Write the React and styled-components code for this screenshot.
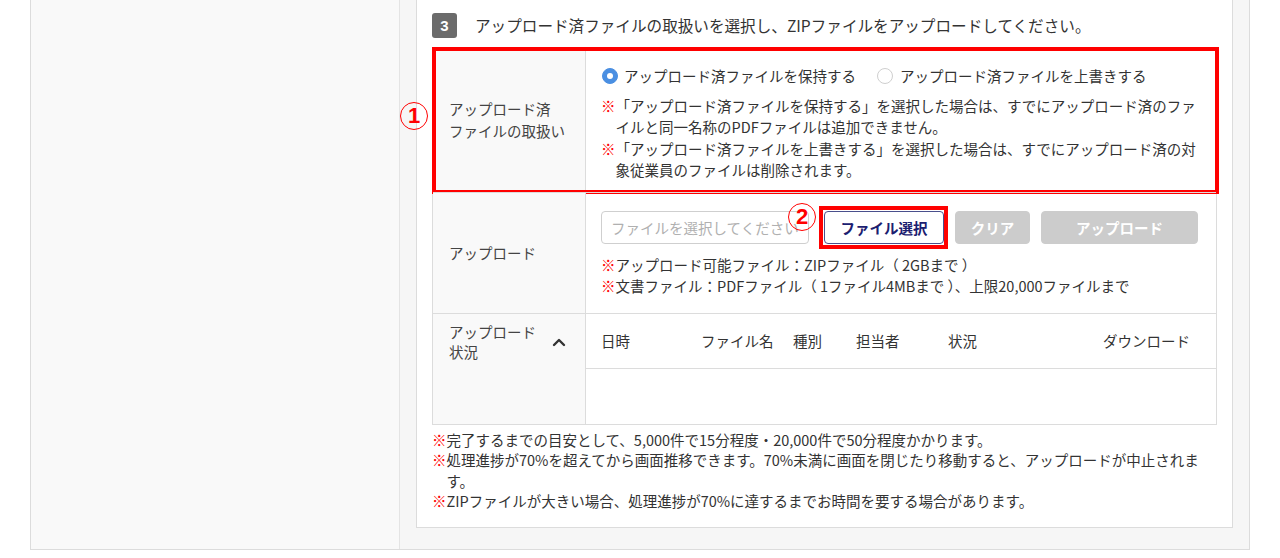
import React from "react";
import styled, { createGlobalStyle } from "styled-components";

const GlobalStyle = createGlobalStyle`
  html, body { margin: 0; padding: 0; background: #fff; }
  body {
    font-family: "Noto Sans CJK JP", "Noto Sans", sans-serif;
    color: #333;
    font-size: 14.5px;
  }
  * { box-sizing: border-box; }
`;

const Page = styled.div`
  padding-left: 30px;
`;

const Frame = styled.div`
  width: 1220px;
  display: grid;
  grid-template-columns: 369px 849px;
  border: 1px solid #dcdcdc;
  border-top: none;
`;

const SideColumn = styled.aside`
  background: #f9f9f9;
  border-right: 1px solid #e4e4e4;
`;

const MainArea = styled.main`
  background: #f6f6f6;
  padding: 0 16px 21px 16px;
`;

const Card = styled.section`
  background: #fff;
  border: 1px solid #dcdcdc;
  border-top: none;
  padding: 13px 15px 16px 15px;
`;

const StepHeading = styled.div`
  display: flex;
  align-items: center;
  gap: 18px;
  height: 25px;
  margin-bottom: 9px;
`;

const StepBadge = styled.span`
  width: 25px;
  height: 25px;
  border-radius: 3px;
  background: #6b6b6b;
  color: #fff;
  font-family: "Liberation Sans", sans-serif;
  font-weight: bold;
  font-size: 15px;
  display: flex;
  align-items: center;
  justify-content: center;
`;

const StepTitle = styled.h2`
  margin: 0;
  font-size: 15.6px;
  font-weight: normal;
  line-height: 25px;
  color: #333;
`;

const FormTable = styled.div`
  border: 1px solid #dcdcdc;
`;

const FormRow = styled.div`
  position: relative;
  display: grid;
  grid-template-columns: 153px 1fr;
  & + & {
    border-top: 1px solid #dcdcdc;
  }
`;

const LabelCell = styled.div`
  background: #f9f9f9;
  border-right: 1px solid #dcdcdc;
  color: #444;
  display: flex;
  align-items: ${(p) => (p.$top ? "flex-start" : "center")};
  padding: ${(p) => (p.$top ? "8px 19px 0 16px" : "0 16px")};
  line-height: ${(p) => p.$lh || "22px"};
`;

const ValueCell = styled.div`
  padding: ${(p) => p.$pad || "0"};
`;

const RadioGroup = styled.div`
  display: flex;
  align-items: center;
  height: 21px;
  line-height: 21px;
  margin-bottom: 9px;
`;

const RadioOption = styled.label`
  display: inline-flex;
  align-items: center;
  gap: ${(p) => (p.$checked ? "6px" : "7px")};
  margin-left: ${(p) => (p.$checked ? "1px" : "21px")};
  color: #333;
`;

const RadioMark = styled.span`
  position: relative;
  width: 16px;
  height: 16px;
  border-radius: 50%;
  background: ${(p) => (p.$checked ? "#4a8fe2" : "#fff")};
  border: 1px solid ${(p) => (p.$checked ? "#4a8fe2" : "#cfcfcf")};
  &::after {
    content: "";
    display: ${(p) => (p.$checked ? "block" : "none")};
    position: absolute;
    left: 4px;
    top: 4px;
    width: 6px;
    height: 6px;
    border-radius: 50%;
    background: #fff;
  }
`;

const Note = styled.p`
  margin: 0;
  padding-left: 1em;
  text-indent: -1em;
  line-height: ${(p) => p.$lh || "21.3px"};
  color: #333;
  white-space: nowrap;
`;

const Mark = styled.span`
  color: #f00;
  font-weight: bold;
`;

const AnnotationFrame = styled.div`
  position: absolute;
  top: -1px;
  left: -1px;
  right: -3px;
  bottom: -2px;
  border: 4px solid #f00;
  pointer-events: none;
`;

const Callout = styled.span`
  position: absolute;
  top: ${(p) => p.$top}px;
  left: ${(p) => p.$left}px;
  width: 28px;
  height: 28px;
  border: 1px solid #f00;
  border-radius: 50%;
  color: #f00;
  font-family: "Liberation Sans", sans-serif;
  font-weight: bold;
  font-size: 22px;
  line-height: 1;
  display: flex;
  align-items: center;
  justify-content: center;
  pointer-events: none;
`;

const UploadControls = styled.div`
  display: flex;
  align-items: center;
  height: 33px;
  margin-bottom: 10px;
`;

const FileInput = styled.input`
  width: 208px;
  height: 33px;
  border: 1px solid #cfcfcf;
  border-radius: 4px;
  padding: 0 9px;
  font-family: inherit;
  font-size: 14.5px;
  color: #333;
  margin-right: 15px;
  &::placeholder {
    color: #b0b0b0;
  }
`;

const Highlight = styled.span`
  position: relative;
  display: inline-flex;
  &::after {
    content: "";
    position: absolute;
    top: -5px;
    left: -5px;
    right: -4px;
    bottom: -5px;
    border: 4px solid #f00;
    pointer-events: none;
  }
`;

const Button = styled.button`
  width: ${(p) => p.$w}px;
  height: 33px;
  margin-left: ${(p) => p.$ml || 0}px;
  border-radius: 4px;
  font-family: inherit;
  font-size: 14.5px;
  font-weight: bold;
  padding: 0;
  cursor: pointer;
  border: 1px solid ${(p) => (p.$primary ? "#4a4f8c" : "#cccccc")};
  background: ${(p) => (p.$primary ? "#fff" : "#cccccc")};
  color: ${(p) => (p.$primary ? "#1b2070" : "#fff")};
`;

const StatusLabel = styled.div`
  display: flex;
  align-items: center;
  justify-content: space-between;
  width: 100%;
`;

const StatusTable = styled.div`
  display: grid;
  grid-template-rows: 55px 55px;
`;

const StatusHeader = styled.div`
  display: grid;
  grid-template-columns: 100px 92px 63px 92px 155px 1fr;
  align-items: center;
  border-bottom: 1px solid #dcdcdc;
  color: #333;
`;

const HeaderCell = styled.span`
  padding-left: 15px;
`;

const NoteList = styled.div`
  margin-top: 5px;
`;

const ChevronUp = () => (
  <svg width="14" height="10" viewBox="0 0 14 10" aria-hidden="true">
    <polyline
      points="2,8 7,3 12,8"
      fill="none"
      stroke="#333"
      strokeWidth="2.4"
      strokeLinecap="round"
      strokeLinejoin="round"
    />
  </svg>
);

export default function App() {
  return (
    <>
      <GlobalStyle />
      <Page>
        <Frame>
          <SideColumn />
          <MainArea>
            <Card>
              <StepHeading>
                <StepBadge>3</StepBadge>
                <StepTitle>
                  アップロード済ファイルの取扱いを選択し、ZIPファイルをアップロードしてください。
                </StepTitle>
              </StepHeading>

              <FormTable>
                <FormRow>
                  <LabelCell>
                    <span>
                      アップロード済
                      <br />
                      ファイルの取扱い
                    </span>
                  </LabelCell>
                  <ValueCell $pad="17px 15px 12px 15px">
                    <RadioGroup>
                      <RadioOption $checked>
                        <RadioMark $checked />
                        アップロード済ファイルを保持する
                      </RadioOption>
                      <RadioOption>
                        <RadioMark />
                        アップロード済ファイルを上書きする
                      </RadioOption>
                    </RadioGroup>
                    <Note>
                      <Mark>※</Mark>「アップロード済ファイルを保持する」を選択した場合は、すでにアップロード済のファ
                      <br />
                      イルと同一名称のPDFファイルは追加できません。
                    </Note>
                    <Note>
                      <Mark>※</Mark>「アップロード済ファイルを上書きする」を選択した場合は、すでにアップロード済の対
                      <br />
                      象従業員のファイルは削除されます。
                    </Note>
                  </ValueCell>
                  <AnnotationFrame />
                  <Callout $top={54} $left={-33}>1</Callout>
                </FormRow>

                <FormRow>
                  <LabelCell>アップロード</LabelCell>
                  <ValueCell $pad="18px 15px 16px 15px">
                    <UploadControls>
                      <FileInput readOnly placeholder="ファイルを選択してください" />
                      <Highlight>
                        <Button $primary $w={120}>ファイル選択</Button>
                        <Callout $top={-8} $left={-36}>2</Callout>
                      </Highlight>
                      <Button $w={75} $ml={11}>クリア</Button>
                      <Button $w={157} $ml={11}>アップロード</Button>
                    </UploadControls>
                    <Note>
                      <Mark>※</Mark>アップロード可能ファイル：ZIPファイル（ 2GBまで ）
                    </Note>
                    <Note>
                      <Mark>※</Mark>文書ファイル：PDFファイル（ 1ファイル4MBまで ）、上限20,000ファイルまで
                    </Note>
                  </ValueCell>
                </FormRow>

                <FormRow>
                  <LabelCell $top $lh="20px">
                    <StatusLabel>
                      <span>
                        アップロード
                        <br />
                        状況
                      </span>
                      <ChevronUp />
                    </StatusLabel>
                  </LabelCell>
                  <ValueCell>
                    <StatusTable>
                      <StatusHeader>
                        <HeaderCell>日時</HeaderCell>
                        <HeaderCell>ファイル名</HeaderCell>
                        <HeaderCell>種別</HeaderCell>
                        <HeaderCell>担当者</HeaderCell>
                        <HeaderCell>状況</HeaderCell>
                        <HeaderCell>ダウンロード</HeaderCell>
                      </StatusHeader>
                      <div />
                    </StatusTable>
                  </ValueCell>
                </FormRow>
              </FormTable>

              <NoteList>
                <Note $lh="20.4px">
                  <Mark>※</Mark>完了するまでの目安として、5,000件で15分程度・20,000件で50分程度かかります。
                </Note>
                <Note $lh="20.4px">
                  <Mark>※</Mark>処理進捗が70%を超えてから画面推移できます。70%未満に画面を閉じたり移動すると、アップロードが中止されま
                  <br />
                  す。
                </Note>
                <Note $lh="20.4px">
                  <Mark>※</Mark>ZIPファイルが大きい場合、処理進捗が70%に達するまでお時間を要する場合があります。
                </Note>
              </NoteList>
            </Card>
          </MainArea>
        </Frame>
      </Page>
    </>
  );
}
